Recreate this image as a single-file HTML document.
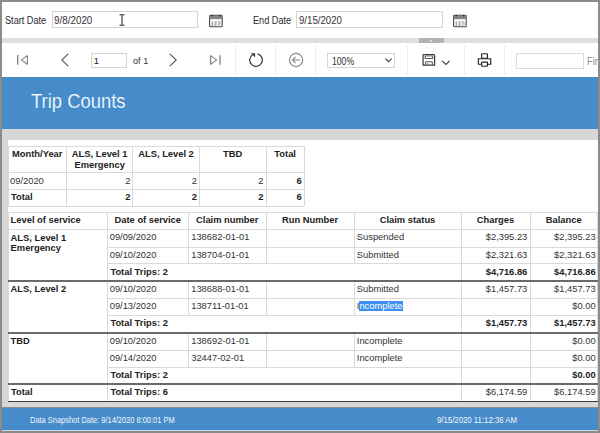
<!DOCTYPE html>
<html><head><meta charset="utf-8"><style>
html,body{margin:0;padding:0;width:600px;height:433px;overflow:hidden;background:#8d8b8a;}
body{position:relative;font-family:"Liberation Sans",sans-serif;}
.t{position:absolute;white-space:nowrap;line-height:1;}
.r{position:absolute;}
svg.r{overflow:visible;}
</style></head><body>
<div class="r" style="left:0px;top:0px;width:600px;height:433px;background:#8d8b8a;"></div>
<div class="r" style="left:2px;top:2px;width:596px;height:36px;background:#ffffff;"></div>
<div class="r" style="left:2px;top:37.5px;width:596px;height:5.799999999999997px;background:#dedede;"></div>
<div class="r" style="left:418.8px;top:38.4px;width:25.399999999999977px;height:4.5px;background:#b2b2b2;"></div>
<div class="r" style="left:430.3px;top:39.8px;width:2.0px;height:1.8000000000000043px;background:#dcdcdc;"></div>
<div class="r" style="left:2px;top:43.3px;width:596px;height:33.7px;background:#ffffff;"></div>
<div class="t" style="left:5.3px;top:16px;font-size:10px;color:#2a2a2a;transform:scaleX(0.915);transform-origin:0 0;">Start Date</div>
<div class="r" style="left:51.5px;top:11.3px;width:146.5px;height:16.9px;background:#fff;border:1px solid #d5d5d5;box-sizing:border-box;"></div>
<div class="t" style="left:54.3px;top:16px;font-size:10px;color:#333;transform:scaleX(0.985);transform-origin:0 0;">9/8/2020</div>
<svg class="r" style="left:118px;top:13px" width="8" height="14" viewBox="0 0 8 14"><path d="M1.5 1.7 H6.5 M4 1.7 V12.3 M1.5 12.3 H6.5" stroke="#2a2a2a" stroke-width="1.05" fill="none"/></svg>
<svg class="r" style="left:208.6px;top:15px" width="14" height="13" viewBox="0 0 14 13"><rect x="0.6" y="0.4" width="12.6" height="11.3" rx="0.8" fill="#fff" stroke="#4a4a4a" stroke-width="1.1"/><rect x="0.6" y="0.4" width="12.6" height="3.8" fill="#858585"/><path d="M3.2 6.3 V11 M6.9 6 V11 M9.9 6 V10.6" stroke="#777" stroke-width="0.9"/><path d="M5.2 6.8 V11 M11.3 6.5 V10" stroke="#bbb" stroke-width="0.8"/><path d="M3.2 0 V1.3 M10.6 0 V1.3" stroke="#222" stroke-width="1.3"/></svg>
<div class="t" style="left:253px;top:16px;font-size:10px;color:#2a2a2a;transform:scaleX(0.915);transform-origin:0 0;">End Date</div>
<div class="r" style="left:295.5px;top:11.3px;width:147.0px;height:16.9px;background:#fff;border:1px solid #d5d5d5;box-sizing:border-box;"></div>
<div class="t" style="left:298.7px;top:16px;font-size:10px;color:#333;transform:scaleX(0.965);transform-origin:0 0;">9/15/2020</div>
<svg class="r" style="left:453px;top:15px" width="14" height="13" viewBox="0 0 14 13"><rect x="0.6" y="0.4" width="12.6" height="11.3" rx="0.8" fill="#fff" stroke="#4a4a4a" stroke-width="1.1"/><rect x="0.6" y="0.4" width="12.6" height="3.8" fill="#858585"/><path d="M3.2 6.3 V11 M6.9 6 V11 M9.9 6 V10.6" stroke="#777" stroke-width="0.9"/><path d="M5.2 6.8 V11 M11.3 6.5 V10" stroke="#bbb" stroke-width="0.8"/><path d="M3.2 0 V1.3 M10.6 0 V1.3" stroke="#222" stroke-width="1.3"/></svg>
<div class="r" style="left:235.0px;top:45px;width:1.0px;height:30px;background:#f0f0f0;"></div>
<div class="r" style="left:275.0px;top:45px;width:1.0px;height:30px;background:#f0f0f0;"></div>
<div class="r" style="left:315.0px;top:45px;width:1.0px;height:30px;background:#f0f0f0;"></div>
<div class="r" style="left:406.5px;top:45px;width:1.0px;height:30px;background:#f0f0f0;"></div>
<div class="r" style="left:463.8px;top:45px;width:1.0px;height:30px;background:#f0f0f0;"></div>
<div class="r" style="left:503.8px;top:45px;width:1.0px;height:30px;background:#f0f0f0;"></div>
<svg class="r" style="left:15px;top:53px" width="16" height="14" viewBox="0 0 16 14"><path d="M2.7 2 V11.8" stroke="#808080" stroke-width="1.3"/><path d="M12.4 2.6 L6.3 6.9 L12.4 11.3 Z" stroke="#808080" stroke-width="1.1" fill="none" stroke-linejoin="round"/></svg>
<svg class="r" style="left:59px;top:52px" width="12" height="16" viewBox="0 0 12 16"><path d="M9.3 1.8 L2.8 8 L9.3 14.2" stroke="#555" stroke-width="1.1" fill="none"/></svg>
<div class="r" style="left:91.3px;top:52.5px;width:35.5px;height:15.5px;background:#fff;border:1px solid #d5d5d5;box-sizing:border-box;"></div>
<div class="t" style="left:93.8px;top:56px;font-size:9.4px;color:#222;">1</div>
<div class="t" style="left:133px;top:56px;font-size:9.6px;color:#333;transform:scaleX(0.95);transform-origin:0 0;">of 1</div>
<svg class="r" style="left:167px;top:52px" width="12" height="16" viewBox="0 0 12 16"><path d="M2.7 1.8 L9.2 8 L2.7 14.2" stroke="#555" stroke-width="1.1" fill="none"/></svg>
<svg class="r" style="left:208px;top:53px" width="16" height="14" viewBox="0 0 16 14"><path d="M2.6 2.6 L8.6 6.9 L2.6 11.3 Z" stroke="#808080" stroke-width="1.1" fill="none" stroke-linejoin="round"/><path d="M12 2.2 V11.8" stroke="#808080" stroke-width="1.3"/></svg>
<svg class="r" style="left:246px;top:50px" width="20" height="20" viewBox="0 0 20 20"><path d="M11.63 3.91 A6.3 6.3 0 1 1 6.6 4.7" stroke="#333" stroke-width="1.2" fill="none"/><path d="M5.4 3.1 L9.1 3.7 L8.7 7.0 Z" fill="#333" stroke="#333" stroke-width="0.4" stroke-linejoin="round"/></svg>
<svg class="r" style="left:287px;top:51px" width="18" height="18" viewBox="0 0 18 18"><circle cx="9.1" cy="9" r="6.6" stroke="#8a8a8a" stroke-width="1.2" fill="none"/><path d="M13 9 H5.5 M8.6 5.8 L5.4 9 L8.6 12.2" stroke="#8a8a8a" stroke-width="1.2" fill="none"/></svg>
<div class="r" style="left:327.3px;top:52.5px;width:67.30000000000001px;height:15.299999999999997px;background:#fff;border:1px solid #d5d5d5;box-sizing:border-box;"></div>
<div class="t" style="left:332px;top:57px;font-size:10px;color:#333;transform:scaleX(0.865);transform-origin:0 0;">100%</div>
<svg class="r" style="left:384px;top:57px" width="9" height="6" viewBox="0 0 9 6"><path d="M1.3 1.6 L4.5 4.7 L7.7 1.6" stroke="#444" stroke-width="1.1" fill="none"/></svg>
<svg class="r" style="left:421px;top:53px" width="16" height="14" viewBox="0 0 16 14"><path d="M2.1 1.5 H12.8 L13.6 2.3 V12.2 H2.1 Z" stroke="#3a3a3a" stroke-width="1.2" fill="#fff" stroke-linejoin="round"/><rect x="4.2" y="2.9" width="7.5" height="2.6" stroke="#555" stroke-width="1" fill="#fff"/><path d="M4.5 12.2 V8.8 H11.3 V12.2" stroke="#555" stroke-width="1" fill="none"/><path d="M6.8 9.8 V12" stroke="#777" stroke-width="0.9"/></svg>
<svg class="r" style="left:441px;top:59px" width="10" height="7" viewBox="0 0 10 7"><path d="M1.2 2 L4.9 5.5 L8.6 2" stroke="#444" stroke-width="1.1" fill="none"/></svg>
<svg class="r" style="left:476px;top:52px" width="17" height="16" viewBox="0 0 17 16"><rect x="5.65" y="1.75" width="5.8" height="4.6" rx="0.5" stroke="#222" stroke-width="1.15" fill="#fff"/><path d="M5.3 12.2 H2.35 V6.75 H14.75 V12.2 H11.8" stroke="#222" stroke-width="1.15" fill="#fff" stroke-linejoin="round"/><rect x="5.65" y="10.15" width="5.8" height="4.1" rx="0.5" stroke="#222" stroke-width="1.15" fill="#fff"/></svg>
<div class="r" style="left:516.3px;top:53px;width:67.70000000000005px;height:15.5px;background:#fff;border:1px solid #dcdcdc;box-sizing:border-box;"></div>
<div class="t" style="left:586.8px;top:57px;font-size:10px;color:#8c8c8c;transform:scaleX(0.93);transform-origin:0 0;">Find</div>
<div class="r" style="left:2px;top:77px;width:596px;height:52px;background:#468bca;"></div>
<div class="t" style="left:30.6px;top:92px;font-size:19.6px;color:#ffffff;transform:scaleX(0.94);transform-origin:0 0;-webkit-text-stroke:0.2px #468bca;">Trip Counts</div>
<div class="r" style="left:2px;top:129px;width:596px;height:278px;background:#d8d7d7;"></div>
<div class="r" style="left:7.5px;top:139.5px;width:590.0px;height:262.5px;background:#ffffff;"></div>
<div class="r" style="left:2px;top:407.5px;width:596px;height:22.5px;background:#468bca;"></div>
<div class="r" style="left:2px;top:430px;width:596px;height:1px;background:#cfd8e4;"></div>
<div class="t" style="left:29.8px;top:416px;font-size:8.4px;color:#f2f6fc;transform:scaleX(0.89);transform-origin:0 0;">Data Snapshot Date: 9/14/2020 8:00:01 PM</div>
<div class="t" style="left:436.8px;top:416px;font-size:8.4px;color:#f2f6fc;transform:scaleX(0.93);transform-origin:0 0;">9/15/2020 11:12:36 AM</div>
<div class="r" style="left:8px;top:145.8px;width:296.3px;height:1.0px;background:#dadada;"></div>
<div class="r" style="left:8px;top:171.8px;width:296.3px;height:1.0px;background:#dadada;"></div>
<div class="r" style="left:8px;top:188.7px;width:296.3px;height:1.0px;background:#dadada;"></div>
<div class="r" style="left:8px;top:205.5px;width:296.3px;height:1.0px;background:#dadada;"></div>
<div class="r" style="left:7.5px;top:146.3px;width:1.0px;height:59.69999999999999px;background:#dadada;"></div>
<div class="r" style="left:66.0px;top:146.3px;width:1.0px;height:59.69999999999999px;background:#dadada;"></div>
<div class="r" style="left:132.3px;top:146.3px;width:1.0px;height:59.69999999999999px;background:#dadada;"></div>
<div class="r" style="left:198.8px;top:146.3px;width:1.0px;height:59.69999999999999px;background:#dadada;"></div>
<div class="r" style="left:265.5px;top:146.3px;width:1.0px;height:59.69999999999999px;background:#dadada;"></div>
<div class="r" style="left:303.8px;top:146.3px;width:1.0px;height:59.69999999999999px;background:#dadada;"></div>
<div class="t" style="left:-112.75px;width:300px;text-align:center;top:150px;font-size:9.35px;color:#222;font-weight:bold;">Month/Year</div>
<div class="t" style="left:-50.35px;width:300px;text-align:center;top:150px;font-size:9.35px;color:#222;font-weight:bold;">ALS, Level 1</div>
<div class="t" style="left:-50.35px;width:300px;text-align:center;top:161px;font-size:9.35px;color:#222;font-weight:bold;">Emergency</div>
<div class="t" style="left:16.05px;width:300px;text-align:center;top:150px;font-size:9.35px;color:#222;font-weight:bold;">ALS, Level 2</div>
<div class="t" style="left:82.65px;width:300px;text-align:center;top:150px;font-size:9.35px;color:#222;font-weight:bold;">TBD</div>
<div class="t" style="left:135.15px;width:300px;text-align:center;top:150px;font-size:9.35px;color:#222;font-weight:bold;">Total</div>
<div class="t" style="left:10px;top:177px;font-size:9.35px;color:#333;">09/2020</div>
<div class="t" style="right:469.60px;top:177px;font-size:9.35px;color:#333;">2</div>
<div class="t" style="right:403.10px;top:177px;font-size:9.35px;color:#333;">2</div>
<div class="t" style="right:336.50px;top:177px;font-size:9.35px;color:#333;">2</div>
<div class="t" style="right:298.20px;top:177px;font-size:9.35px;color:#222;font-weight:bold;">6</div>
<div class="t" style="left:11px;top:193px;font-size:9.35px;color:#222;font-weight:bold;">Total</div>
<div class="t" style="right:469.60px;top:193px;font-size:9.35px;color:#222;font-weight:bold;">2</div>
<div class="t" style="right:403.10px;top:193px;font-size:9.35px;color:#222;font-weight:bold;">2</div>
<div class="t" style="right:336.50px;top:193px;font-size:9.35px;color:#222;font-weight:bold;">2</div>
<div class="t" style="right:298.20px;top:193px;font-size:9.35px;color:#222;font-weight:bold;">6</div>
<div class="r" style="left:8px;top:211.8px;width:589.5px;height:1.0px;background:#dadada;"></div>
<div class="r" style="left:7.5px;top:212.3px;width:1.0px;height:17.0px;background:#dadada;"></div>
<div class="r" style="left:106.75px;top:212.3px;width:1.0px;height:17.0px;background:#dadada;"></div>
<div class="r" style="left:187.8px;top:212.3px;width:1.0px;height:17.0px;background:#dadada;"></div>
<div class="r" style="left:265.6px;top:212.3px;width:1.0px;height:17.0px;background:#dadada;"></div>
<div class="r" style="left:353.5px;top:212.3px;width:1.0px;height:17.0px;background:#dadada;"></div>
<div class="r" style="left:460.5px;top:212.3px;width:1.0px;height:17.0px;background:#dadada;"></div>
<div class="r" style="left:529.5px;top:212.3px;width:1.0px;height:17.0px;background:#dadada;"></div>
<div class="r" style="left:597.0px;top:212.3px;width:1.0px;height:17.0px;background:#dadada;"></div>
<div class="t" style="left:10.6px;top:216px;font-size:9.35px;color:#222;font-weight:bold;">Level of service</div>
<div class="t" style="left:-2.22px;width:300px;text-align:center;top:216px;font-size:9.35px;color:#222;font-weight:bold;">Date of service</div>
<div class="t" style="left:77.20px;width:300px;text-align:center;top:216px;font-size:9.35px;color:#222;font-weight:bold;">Claim number</div>
<div class="t" style="left:160.05px;width:300px;text-align:center;top:216px;font-size:9.35px;color:#222;font-weight:bold;">Run Number</div>
<div class="t" style="left:257.50px;width:300px;text-align:center;top:216px;font-size:9.35px;color:#222;font-weight:bold;">Claim status</div>
<div class="t" style="left:345.50px;width:300px;text-align:center;top:216px;font-size:9.35px;color:#222;font-weight:bold;">Charges</div>
<div class="t" style="left:413.75px;width:300px;text-align:center;top:216px;font-size:9.35px;color:#222;font-weight:bold;">Balance</div>
<div class="r" style="left:8px;top:228.8px;width:589.5px;height:1.0px;background:#dadada;"></div>
<div class="r" style="left:7.5px;top:229.3px;width:1.0px;height:51.69999999999999px;background:#dadada;"></div>
<div class="r" style="left:106.75px;top:229.3px;width:1.0px;height:51.69999999999999px;background:#dadada;"></div>
<div class="t" style="left:10.6px;top:234px;font-size:9.35px;color:#222;font-weight:bold;">ALS, Level 1</div>
<div class="t" style="left:10.6px;top:244px;font-size:9.35px;color:#222;font-weight:bold;">Emergency</div>
<div class="r" style="left:106.75px;top:229.3px;width:1.0px;height:17.69999999999999px;background:#dadada;"></div>
<div class="r" style="left:187.8px;top:229.3px;width:1.0px;height:17.69999999999999px;background:#dadada;"></div>
<div class="r" style="left:265.6px;top:229.3px;width:1.0px;height:17.69999999999999px;background:#dadada;"></div>
<div class="r" style="left:353.5px;top:229.3px;width:1.0px;height:17.69999999999999px;background:#dadada;"></div>
<div class="r" style="left:460.5px;top:229.3px;width:1.0px;height:17.69999999999999px;background:#dadada;"></div>
<div class="r" style="left:529.5px;top:229.3px;width:1.0px;height:17.69999999999999px;background:#dadada;"></div>
<div class="r" style="left:597.0px;top:229.3px;width:1.0px;height:17.69999999999999px;background:#dadada;"></div>
<div class="r" style="left:107.25px;top:246.5px;width:490.25px;height:1.0px;background:#dadada;"></div>
<div class="t" style="left:109.7px;top:233px;font-size:9.35px;color:#333;">09/09/2020</div>
<div class="t" style="left:191.2px;top:233px;font-size:9.35px;color:#333;">138682-01-01</div>
<div class="t" style="left:356.8px;top:233px;font-size:9.35px;color:#333;">Suspended</div>
<div class="t" style="right:72.70px;top:233px;font-size:9.35px;color:#333;">$2,395.23</div>
<div class="t" style="right:4.40px;top:233px;font-size:9.35px;color:#333;">$2,395.23</div>
<div class="r" style="left:106.75px;top:247px;width:1.0px;height:16.899999999999977px;background:#dadada;"></div>
<div class="r" style="left:187.8px;top:247px;width:1.0px;height:16.899999999999977px;background:#dadada;"></div>
<div class="r" style="left:265.6px;top:247px;width:1.0px;height:16.899999999999977px;background:#dadada;"></div>
<div class="r" style="left:353.5px;top:247px;width:1.0px;height:16.899999999999977px;background:#dadada;"></div>
<div class="r" style="left:460.5px;top:247px;width:1.0px;height:16.899999999999977px;background:#dadada;"></div>
<div class="r" style="left:529.5px;top:247px;width:1.0px;height:16.899999999999977px;background:#dadada;"></div>
<div class="r" style="left:597.0px;top:247px;width:1.0px;height:16.899999999999977px;background:#dadada;"></div>
<div class="t" style="left:109.7px;top:251px;font-size:9.35px;color:#333;">09/10/2020</div>
<div class="t" style="left:191.2px;top:251px;font-size:9.35px;color:#333;">138704-01-01</div>
<div class="t" style="left:356.8px;top:251px;font-size:9.35px;color:#333;">Submitted</div>
<div class="t" style="right:72.70px;top:251px;font-size:9.35px;color:#333;">$2,321.63</div>
<div class="t" style="right:4.40px;top:251px;font-size:9.35px;color:#333;">$2,321.63</div>
<div class="r" style="left:107.25px;top:263.4px;width:490.25px;height:1.0px;background:#dadada;"></div>
<div class="r" style="left:106.75px;top:263.9px;width:1.0px;height:17.100000000000023px;background:#dadada;"></div>
<div class="r" style="left:460.5px;top:263.9px;width:1.0px;height:17.100000000000023px;background:#dadada;"></div>
<div class="r" style="left:529.5px;top:263.9px;width:1.0px;height:17.100000000000023px;background:#dadada;"></div>
<div class="r" style="left:597.0px;top:263.9px;width:1.0px;height:17.100000000000023px;background:#dadada;"></div>
<div class="t" style="left:110.4px;top:268px;font-size:9.35px;color:#222;font-weight:bold;">Total Trips: 2</div>
<div class="t" style="right:72.70px;top:268px;font-size:9.35px;color:#222;font-weight:bold;">$4,716.86</div>
<div class="t" style="right:4.40px;top:268px;font-size:9.35px;color:#222;font-weight:bold;">$4,716.86</div>
<div class="r" style="left:7.5px;top:281px;width:1.0px;height:51.5px;background:#dadada;"></div>
<div class="r" style="left:106.75px;top:281px;width:1.0px;height:51.5px;background:#dadada;"></div>
<div class="t" style="left:10.6px;top:285px;font-size:9.35px;color:#222;font-weight:bold;">ALS, Level 2</div>
<div class="r" style="left:106.75px;top:281px;width:1.0px;height:17.100000000000023px;background:#dadada;"></div>
<div class="r" style="left:187.8px;top:281px;width:1.0px;height:17.100000000000023px;background:#dadada;"></div>
<div class="r" style="left:265.6px;top:281px;width:1.0px;height:17.100000000000023px;background:#dadada;"></div>
<div class="r" style="left:353.5px;top:281px;width:1.0px;height:17.100000000000023px;background:#dadada;"></div>
<div class="r" style="left:460.5px;top:281px;width:1.0px;height:17.100000000000023px;background:#dadada;"></div>
<div class="r" style="left:529.5px;top:281px;width:1.0px;height:17.100000000000023px;background:#dadada;"></div>
<div class="r" style="left:597.0px;top:281px;width:1.0px;height:17.100000000000023px;background:#dadada;"></div>
<div class="r" style="left:107.25px;top:297.6px;width:490.25px;height:1.0px;background:#dadada;"></div>
<div class="t" style="left:109.7px;top:285px;font-size:9.35px;color:#333;">09/10/2020</div>
<div class="t" style="left:191.2px;top:285px;font-size:9.35px;color:#333;">138688-01-01</div>
<div class="t" style="left:356.8px;top:285px;font-size:9.35px;color:#333;">Submitted</div>
<div class="t" style="right:72.70px;top:285px;font-size:9.35px;color:#333;">$1,457.73</div>
<div class="t" style="right:4.40px;top:285px;font-size:9.35px;color:#333;">$1,457.73</div>
<div class="r" style="left:106.75px;top:298.1px;width:1.0px;height:17.099999999999966px;background:#dadada;"></div>
<div class="r" style="left:187.8px;top:298.1px;width:1.0px;height:17.099999999999966px;background:#dadada;"></div>
<div class="r" style="left:265.6px;top:298.1px;width:1.0px;height:17.099999999999966px;background:#dadada;"></div>
<div class="r" style="left:353.5px;top:298.1px;width:1.0px;height:17.099999999999966px;background:#dadada;"></div>
<div class="r" style="left:460.5px;top:298.1px;width:1.0px;height:17.099999999999966px;background:#dadada;"></div>
<div class="r" style="left:529.5px;top:298.1px;width:1.0px;height:17.099999999999966px;background:#dadada;"></div>
<div class="r" style="left:597.0px;top:298.1px;width:1.0px;height:17.099999999999966px;background:#dadada;"></div>
<div class="t" style="left:109.7px;top:302px;font-size:9.35px;color:#333;">09/13/2020</div>
<div class="t" style="left:191.2px;top:302px;font-size:9.35px;color:#333;">138711-01-01</div>
<div class="r" style="left:359px;top:300.6px;width:44.10000000000002px;height:10.699999999999989px;background:#3d8ef0;"></div>
<div class="t" style="left:356.8px;top:302px;font-size:9.35px;color:#333;">I</div>
<div class="t" style="left:359.4px;top:302px;font-size:9.35px;color:#ffffff;">ncomplete</div>
<div class="t" style="right:4.40px;top:302px;font-size:9.35px;color:#333;">$0.00</div>
<div class="r" style="left:107.25px;top:314.7px;width:490.25px;height:1.0px;background:#dadada;"></div>
<div class="r" style="left:106.75px;top:315.2px;width:1.0px;height:17.30000000000001px;background:#dadada;"></div>
<div class="r" style="left:460.5px;top:315.2px;width:1.0px;height:17.30000000000001px;background:#dadada;"></div>
<div class="r" style="left:529.5px;top:315.2px;width:1.0px;height:17.30000000000001px;background:#dadada;"></div>
<div class="r" style="left:597.0px;top:315.2px;width:1.0px;height:17.30000000000001px;background:#dadada;"></div>
<div class="t" style="left:110.4px;top:319px;font-size:9.35px;color:#222;font-weight:bold;">Total Trips: 2</div>
<div class="t" style="right:72.70px;top:319px;font-size:9.35px;color:#222;font-weight:bold;">$1,457.73</div>
<div class="t" style="right:4.40px;top:319px;font-size:9.35px;color:#222;font-weight:bold;">$1,457.73</div>
<div class="r" style="left:7.5px;top:332.5px;width:1.0px;height:52.0px;background:#dadada;"></div>
<div class="r" style="left:106.75px;top:332.5px;width:1.0px;height:52.0px;background:#dadada;"></div>
<div class="t" style="left:10.6px;top:337px;font-size:9.35px;color:#222;font-weight:bold;">TBD</div>
<div class="r" style="left:106.75px;top:332.5px;width:1.0px;height:17.5px;background:#dadada;"></div>
<div class="r" style="left:187.8px;top:332.5px;width:1.0px;height:17.5px;background:#dadada;"></div>
<div class="r" style="left:265.6px;top:332.5px;width:1.0px;height:17.5px;background:#dadada;"></div>
<div class="r" style="left:353.5px;top:332.5px;width:1.0px;height:17.5px;background:#dadada;"></div>
<div class="r" style="left:460.5px;top:332.5px;width:1.0px;height:17.5px;background:#dadada;"></div>
<div class="r" style="left:529.5px;top:332.5px;width:1.0px;height:17.5px;background:#dadada;"></div>
<div class="r" style="left:597.0px;top:332.5px;width:1.0px;height:17.5px;background:#dadada;"></div>
<div class="r" style="left:107.25px;top:349.5px;width:490.25px;height:1.0px;background:#dadada;"></div>
<div class="t" style="left:109.7px;top:337px;font-size:9.35px;color:#333;">09/10/2020</div>
<div class="t" style="left:191.2px;top:337px;font-size:9.35px;color:#333;">138692-01-01</div>
<div class="t" style="left:356.8px;top:337px;font-size:9.35px;color:#333;">Incomplete</div>
<div class="t" style="right:4.40px;top:337px;font-size:9.35px;color:#333;">$0.00</div>
<div class="r" style="left:106.75px;top:350px;width:1.0px;height:17.100000000000023px;background:#dadada;"></div>
<div class="r" style="left:187.8px;top:350px;width:1.0px;height:17.100000000000023px;background:#dadada;"></div>
<div class="r" style="left:265.6px;top:350px;width:1.0px;height:17.100000000000023px;background:#dadada;"></div>
<div class="r" style="left:353.5px;top:350px;width:1.0px;height:17.100000000000023px;background:#dadada;"></div>
<div class="r" style="left:460.5px;top:350px;width:1.0px;height:17.100000000000023px;background:#dadada;"></div>
<div class="r" style="left:529.5px;top:350px;width:1.0px;height:17.100000000000023px;background:#dadada;"></div>
<div class="r" style="left:597.0px;top:350px;width:1.0px;height:17.100000000000023px;background:#dadada;"></div>
<div class="t" style="left:109.7px;top:354px;font-size:9.35px;color:#333;">09/14/2020</div>
<div class="t" style="left:191.2px;top:354px;font-size:9.35px;color:#333;">32447-02-01</div>
<div class="t" style="left:356.8px;top:354px;font-size:9.35px;color:#333;">Incomplete</div>
<div class="t" style="right:4.40px;top:354px;font-size:9.35px;color:#333;">$0.00</div>
<div class="r" style="left:107.25px;top:366.6px;width:490.25px;height:1.0px;background:#dadada;"></div>
<div class="r" style="left:106.75px;top:367.1px;width:1.0px;height:17.399999999999977px;background:#dadada;"></div>
<div class="r" style="left:460.5px;top:367.1px;width:1.0px;height:17.399999999999977px;background:#dadada;"></div>
<div class="r" style="left:529.5px;top:367.1px;width:1.0px;height:17.399999999999977px;background:#dadada;"></div>
<div class="r" style="left:597.0px;top:367.1px;width:1.0px;height:17.399999999999977px;background:#dadada;"></div>
<div class="t" style="left:110.4px;top:371px;font-size:9.35px;color:#222;font-weight:bold;">Total Trips: 2</div>
<div class="t" style="right:4.40px;top:371px;font-size:9.35px;color:#222;font-weight:bold;">$0.00</div>
<div class="r" style="left:8px;top:280px;width:589.5px;height:2px;background:#6a6a6a;"></div>
<div class="r" style="left:8px;top:332px;width:589.5px;height:2px;background:#6a6a6a;"></div>
<div class="r" style="left:8px;top:383px;width:589.5px;height:2px;background:#6a6a6a;"></div>
<div class="r" style="left:7.5px;top:384.5px;width:1.0px;height:16.80000000000001px;background:#dadada;"></div>
<div class="r" style="left:106.75px;top:384.5px;width:1.0px;height:16.80000000000001px;background:#dadada;"></div>
<div class="r" style="left:460.5px;top:384.5px;width:1.0px;height:16.80000000000001px;background:#dadada;"></div>
<div class="r" style="left:529.5px;top:384.5px;width:1.0px;height:16.80000000000001px;background:#dadada;"></div>
<div class="r" style="left:597.0px;top:384.5px;width:1.0px;height:16.80000000000001px;background:#dadada;"></div>
<div class="t" style="left:11px;top:388px;font-size:9.35px;color:#222;font-weight:bold;">Total</div>
<div class="t" style="left:110.4px;top:388px;font-size:9.35px;color:#222;font-weight:bold;">Total Trips: 6</div>
<div class="t" style="right:72.70px;top:388px;font-size:9.35px;color:#333;">$6,174.59</div>
<div class="t" style="right:4.40px;top:388px;font-size:9.35px;color:#333;">$6,174.59</div>
<div class="r" style="left:8px;top:401px;width:589.5px;height:1px;background:#3a3a3a;"></div>
</body></html>
